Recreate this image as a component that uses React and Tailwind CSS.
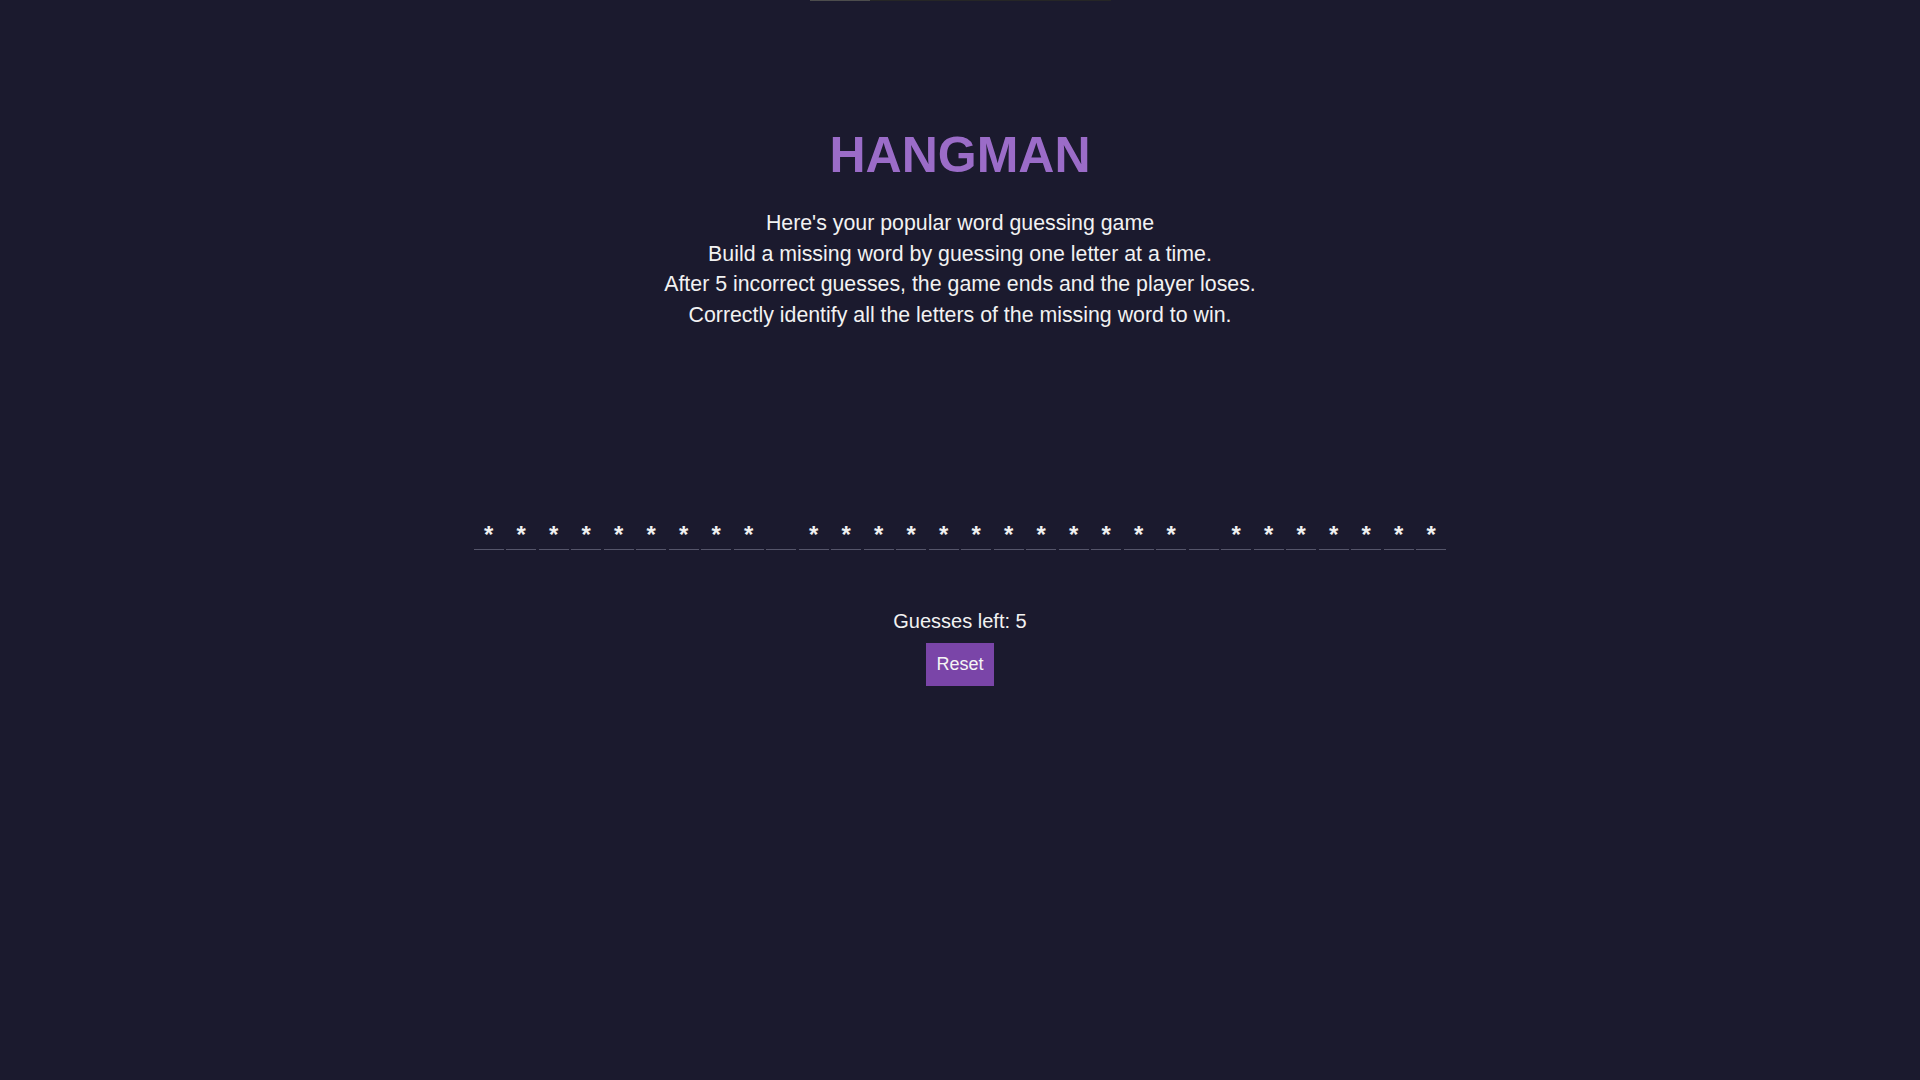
import { useState } from 'react'

const makeSlots = () => {
  // 9 letters, gap, 12 letters, gap, 7 letters
  const groups = [9, 12, 7]
  const slots = []
  groups.forEach((n, gi) => {
    for (let i = 0; i < n; i++) slots.push({ hidden: true })
    if (gi < groups.length - 1) slots.push({ space: true })
  })
  return slots
}

const App = () => {
  const [guesses, setGuesses] = useState(5)
  const [slots, setSlots] = useState(makeSlots)

  const reset = () => {
    setGuesses(5)
    setSlots(makeSlots())
  }

  return (
    <div
      className="min-h-screen bg-[#1b1a2e] text-white"
      style={{ fontFamily: '"Liberation Sans", Arial, sans-serif' }}
    >
      {/* Top progress strip */}
      <div className="flex justify-center">
        <div className="flex w-[301px] h-px bg-[#262626]">
          <div className="w-[60px] h-px bg-[#4d4d4d]"></div>
        </div>
      </div>

      <div className="flex flex-col items-center">
        <h1 className="mt-[125px] text-[50px] leading-[58px] font-bold text-[#9b6cc8]">HANGMAN</h1>

        <div className="mt-[24px] text-center text-[21.33px] leading-[30.5px] text-[#f2f2f2]">
          <p>Here's your popular word guessing game</p>
          <p>Build a missing word by guessing one letter at a time.</p>
          <p>After 5 incorrect guesses, the game ends and the player loses.</p>
          <p>Correctly identify all the letters of the missing word to win.</p>
        </div>

        {/* Word slots */}
        <div className="mt-[190px] flex">
          {slots.map((slot, i) => (
            <div
              key={i}
              className="w-[30px] mx-[1.25px] h-[30px] border-b border-[#55556a] text-center text-[24px] leading-[29px] font-bold text-[#f0f0f0]"
            >
              {slot.space ? '' : '*'}
            </div>
          ))}
        </div>

        <p className="mt-[59px] text-[20px] leading-[24px] text-[#f2f2f2]">Guesses left: {guesses}</p>
        <button
          onClick={reset}
          className="mt-[10px] h-[43px] px-[10px] bg-[#7a45a8] text-[18px] text-[#f5f5f5]"
        >
          Reset
        </button>
      </div>
    </div>
  )
}

export default App
